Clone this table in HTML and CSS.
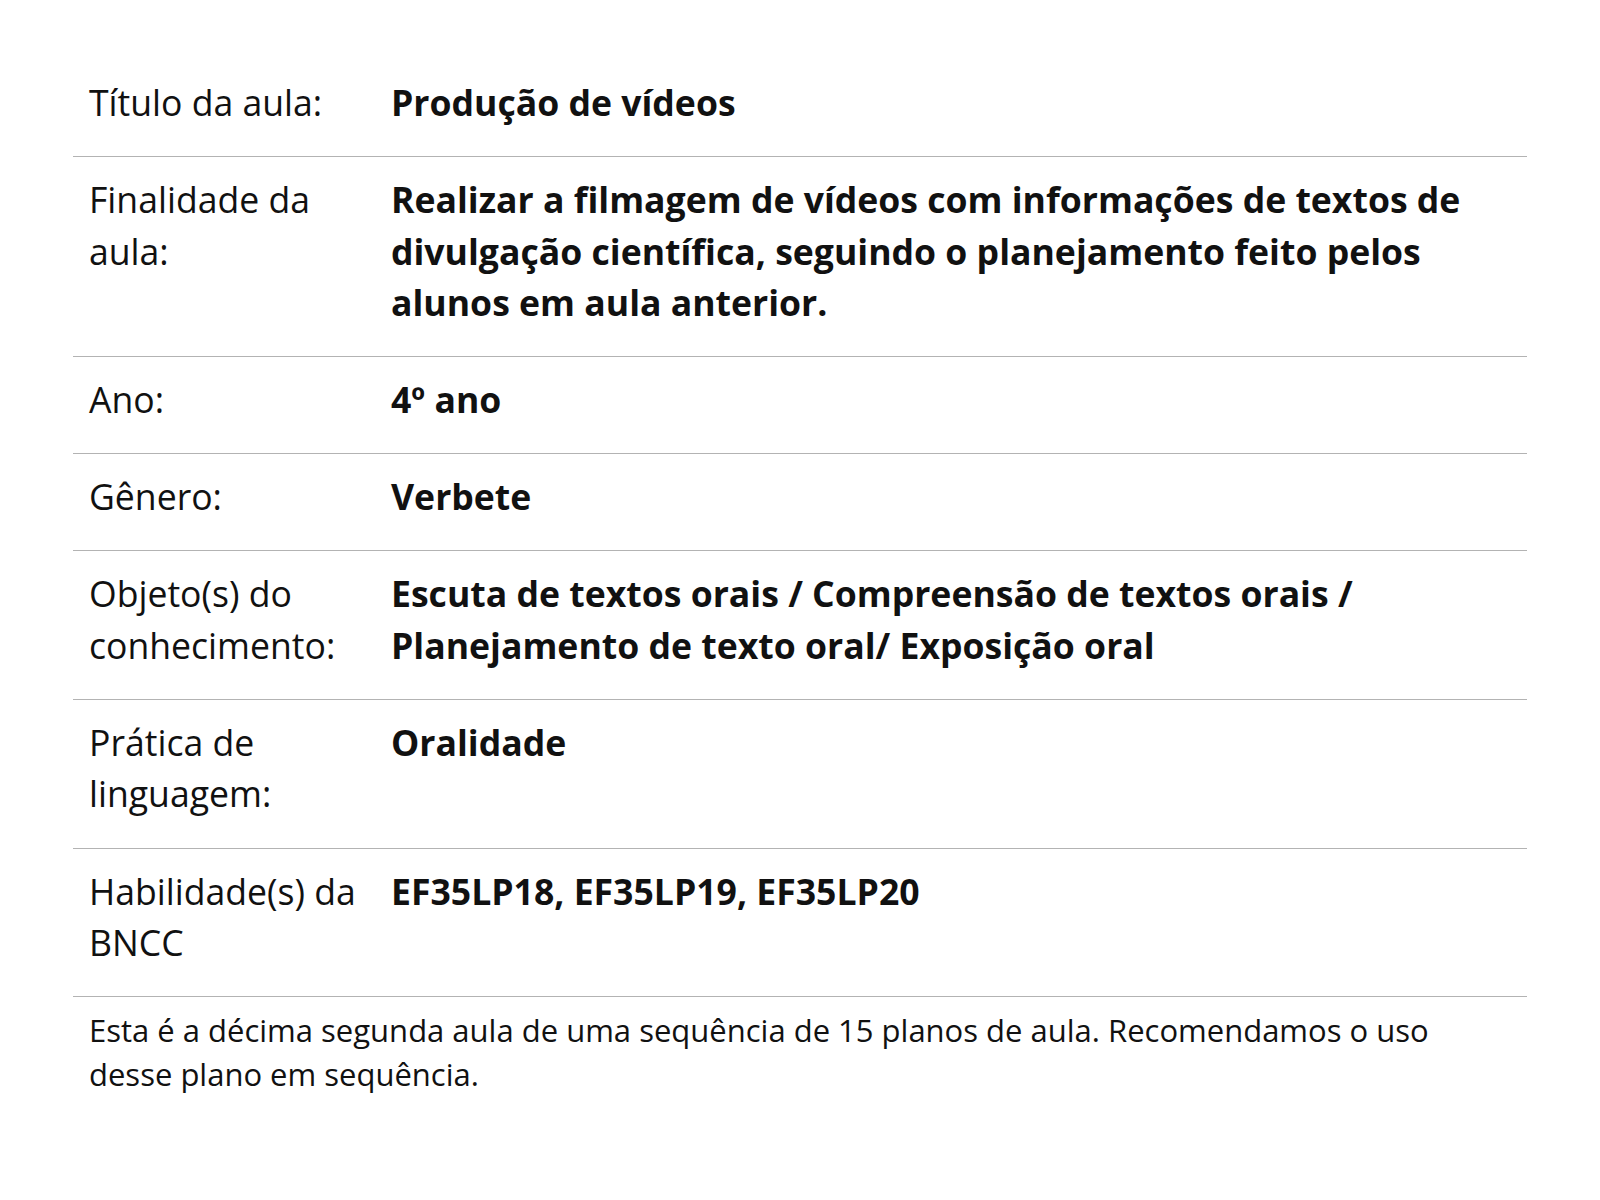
FILE: index.html
```html
<!DOCTYPE html>
<html>
<head>
    <title>Plano de aula</title>
    <link rel="stylesheet" href="styles.css">
</head>
<body>
    <div class="plan">
        <table class="plan-table">
            <colgroup>
                <col class="label-col">
                <col>
            </colgroup>
            <tr>
                <td class="label">Título da aula:</td>
                <td class="value">Produção de vídeos</td>
            </tr>
            <tr>
                <td class="label">Finalidade da aula:</td>
                <td class="value">Realizar a filmagem de vídeos com informações de textos de divulgação científica, seguindo o planejamento feito pelos alunos em aula anterior.</td>
            </tr>
            <tr>
                <td class="label">Ano:</td>
                <td class="value">4º ano</td>
            </tr>
            <tr>
                <td class="label">Gênero:</td>
                <td class="value">Verbete</td>
            </tr>
            <tr>
                <td class="label">Objeto(s) do conhecimento:</td>
                <td class="value">Escuta de textos orais / Compreensão de textos orais / Planejamento de texto oral/ Exposição oral</td>
            </tr>
            <tr>
                <td class="label">Prática de linguagem:</td>
                <td class="value">Oralidade</td>
            </tr>
            <tr>
                <td class="label">Habilidade(s) da BNCC</td>
                <td class="value">EF35LP18, EF35LP19, EF35LP20</td>
            </tr>
        </table>
        <p class="note">Esta é a décima segunda aula de uma sequência de 15 planos de aula. Recomendamos o uso desse plano em sequência.</p>
    </div>
</body>
</html>
```

FILE: styles.css
```css
body {
    margin: 0;
    padding: 0;
    background: white;
    font-family: "Open Sans", Arial, sans-serif;
    color: #111;
}
.plan {
    width: 1454px;
    margin: 60px auto 0;
}
.plan-table {
    width: 100%;
    border-collapse: collapse;
    table-layout: fixed;
}
.label-col {
    width: 302px;
}
.plan-table tr {
    border-bottom: 1px solid #b3b3b3;
}
.plan-table td {
    vertical-align: top;
    font-size: 35.6px;
    line-height: 51.5px;
    padding: 17px 16px 27.6px;
}
.label {
    font-weight: 400;
}
.value {
    font-weight: 700;
}
.note {
    margin: 0;
    padding: 11px 60px 11px 16px;
    font-size: 31px;
    line-height: 44px;
}
```
